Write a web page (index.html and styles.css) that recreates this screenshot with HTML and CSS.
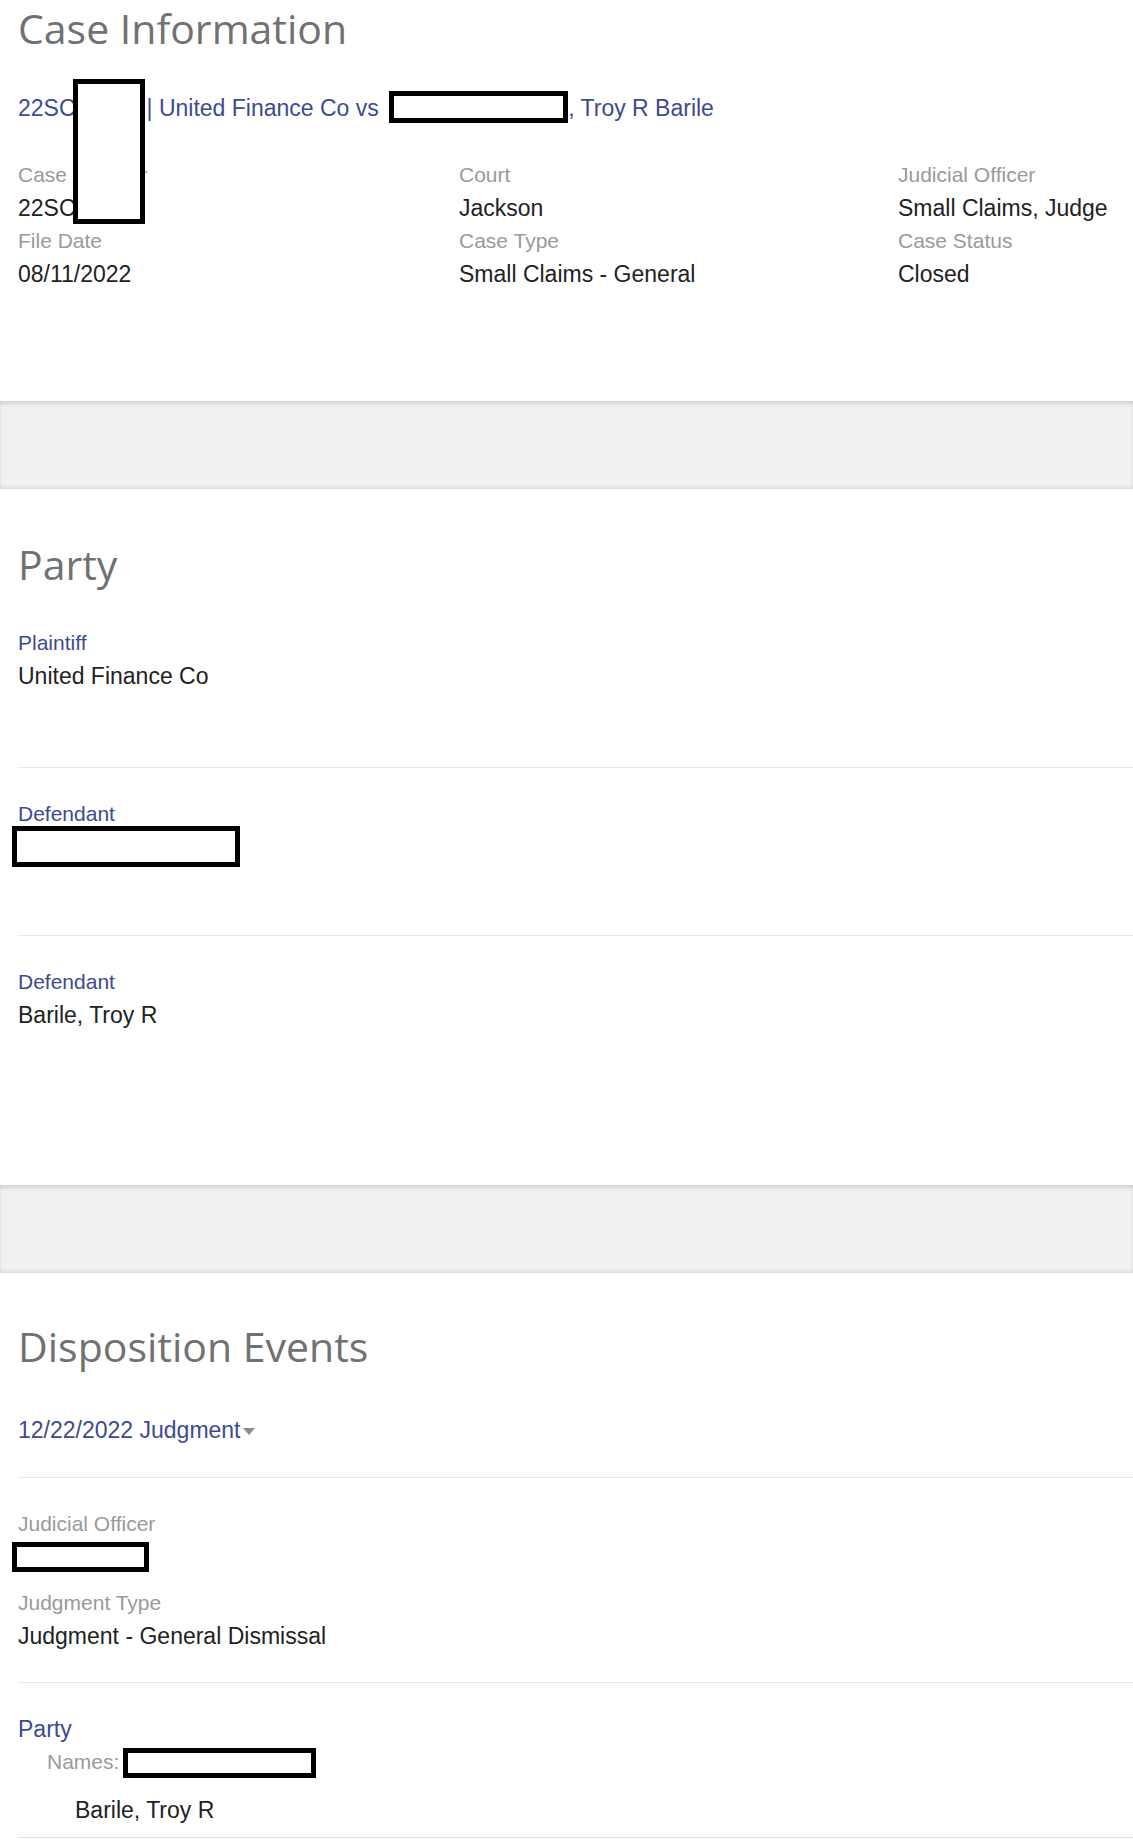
FILE: index.html
```html
<!DOCTYPE html>
<html lang="en">
<head>
<meta charset="utf-8">
<title>Case Information</title>
<link rel="stylesheet" href="styles.css">
</head>
<body>
<section class="section section-case">
  <h1 class="section-title">Case Information</h1>
  <div class="case-title">22SC<span class="gap"></span>| United Finance Co vs <span class="redact redact-title"></span>, Troy R Barile</div>
  <div class="info-grid">
    <div class="info-col">
      <div class="label">Case Number</div>
      <div class="value">22SC</div>
      <div class="label">File Date</div>
      <div class="value">08/11/2022</div>
    </div>
    <div class="info-col">
      <div class="label">Court</div>
      <div class="value">Jackson</div>
      <div class="label">Case Type</div>
      <div class="value">Small Claims - General</div>
    </div>
    <div class="info-col">
      <div class="label">Judicial Officer</div>
      <div class="value">Small Claims, Judge</div>
      <div class="label">Case Status</div>
      <div class="value">Closed</div>
    </div>
  </div>
  <div class="redact redact-case"></div>
</section>

<div class="band"></div>

<section class="section section-party">
  <h2 class="section-title">Party</h2>
  <div class="party-item">
    <div class="label label-link">Plaintiff</div>
    <div class="value">United Finance Co</div>
  </div>
  <div class="party-item">
    <div class="label label-link">Defendant</div>
    <div class="redact redact-defendant"></div>
  </div>
  <div class="party-item">
    <div class="label label-link">Defendant</div>
    <div class="value">Barile, Troy R</div>
  </div>
</section>

<div class="band"></div>

<section class="section section-dispo">
  <h2 class="section-title">Disposition Events</h2>
  <div class="event-head">12/22/2022 Judgment<svg class="caret" width="12" height="7" viewBox="0 0 12 7" aria-hidden="true"><path d="M0 0 H12 L6 7 Z" fill="#8c8c8c"/></svg></div>
  <div class="event-body">
    <div class="dl-group">
      <div class="label">Judicial Officer</div>
      <div class="redact redact-officer"></div>
    </div>
    <div class="dl-group">
      <div class="label">Judgment Type</div>
      <div class="value">Judgment - General Dismissal</div>
    </div>
  </div>
  <div class="event-party">
    <div class="party-head">Party</div>
    <div class="names">Names:<span class="redact redact-names"></span></div>
    <div class="value names-value">Barile, Troy R</div>
  </div>
</section>
</body>
</html>
```

FILE: styles.css
```css
html {
  overflow: hidden;
}

body {
  margin: 0;
  background: #ffffff;
  color: #222222;
  font-family: "Liberation Sans", Arial, sans-serif;
}

.section {
  position: relative;
  padding-left: 18px;
}

.section-title {
  margin: 0;
  font-family: "Open Sans", "Noto Sans", sans-serif;
  font-weight: 400;
  font-size: 41px;
  line-height: 54px;
  color: #717171;
}

/* Case information */
.section-case {
  padding-top: 1px;
  padding-bottom: 110px;
}

.case-title {
  margin-top: 36px;
  font-size: 23px;
  line-height: 33px;
  color: #3d4b8f;
}

.gap {
  display: inline-block;
  width: 71px;
}

.info-grid {
  display: grid;
  grid-template-columns: 441px 439px 1fr;
  margin-top: 34px;
}

.label {
  font-size: 21px;
  line-height: 32px;
  color: #9a9a9a;
}

.label-link {
  color: #3d4b8f;
}

.value {
  font-size: 23px;
  line-height: 34px;
  color: #222222;
}

/* redaction boxes */
.redact {
  box-sizing: border-box;
  border: 5px solid #000000;
  background: #ffffff;
}

.redact-title {
  display: inline-block;
  width: 179px;
  height: 32px;
  vertical-align: -7px;
  margin-left: 4px;
}

.redact-case {
  position: absolute;
  left: 73px;
  top: 79px;
  width: 72px;
  height: 145px;
}

.redact-defendant {
  width: 228px;
  height: 41px;
  margin: -4px 0 -6px -6px;
}

.redact-officer {
  width: 137px;
  height: 30px;
  margin: 2px 0 2px -6px;
}

.redact-names {
  display: inline-block;
  width: 193px;
  height: 30px;
  margin-left: 4px;
  vertical-align: middle;
}

/* grey separator bands */
.band {
  height: 88px;
  background: #f1f1f1;
  box-shadow: inset 0 4px 5px -2px rgba(0, 0, 0, 0.16),
              inset 0 -3px 4px -2px rgba(0, 0, 0, 0.13);
}

/* Party */
.section-party {
  padding-top: 48px;
  padding-bottom: 79px;
}

.section-party .section-title {
  margin-bottom: 6px;
}

.party-item {
  padding: 30px 0 74px;
  border-bottom: 1px solid #e9e9e9;
}

.party-item:last-child {
  border-bottom: none;
}

/* Disposition events */
.section-dispo {
  padding-top: 46px;
}

.event-head {
  margin-top: 40px;
  padding-bottom: 30px;
  border-bottom: 1px solid #e9e9e9;
  font-size: 23px;
  line-height: 34px;
  color: #3d4b8f;
}

.caret {
  margin-left: 2px;
  vertical-align: 3px;
}

.event-body {
  padding: 30px 0 29px;
  border-bottom: 1px solid #e9e9e9;
}

.dl-group + .dl-group {
  margin-top: 15px;
}

.event-party {
  padding: 29px 0 10px;
  border-bottom: 1px solid #e2e2e2;
}

.party-head {
  font-size: 23px;
  line-height: 34px;
  color: #3d4b8f;
}

.names {
  padding-left: 29px;
  font-size: 21px;
  line-height: 32px;
  color: #9a9a9a;
}

.names-value {
  margin-top: 15px;
  padding-left: 57px;
}
```
